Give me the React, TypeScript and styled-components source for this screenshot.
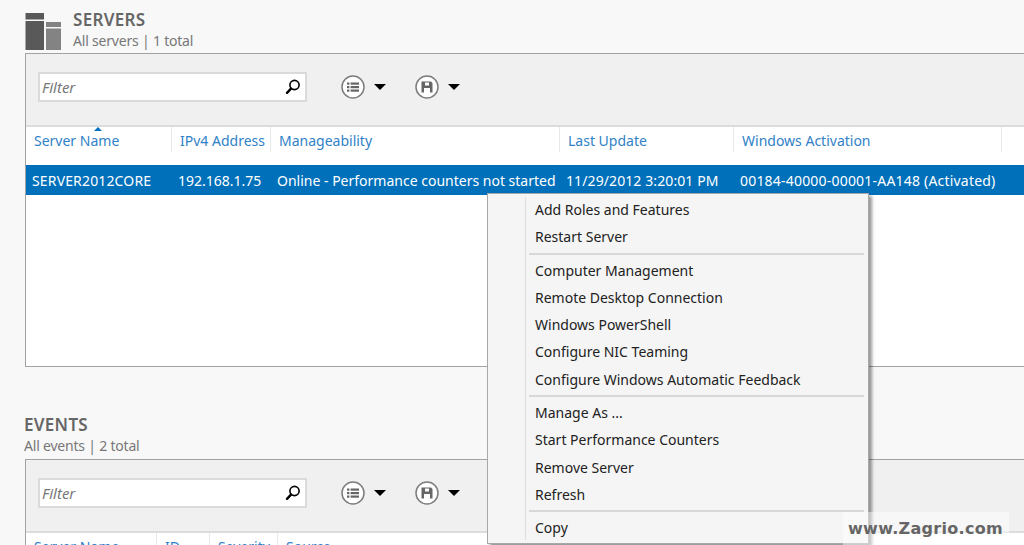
import React from "react";
import styled, { createGlobalStyle } from "styled-components";

const Global = createGlobalStyle`
  html, body { margin: 0; padding: 0; height: 545px; overflow: hidden; background: #f8f8f8; }
  #root { height: 545px; }
  * { box-sizing: border-box; }
`;

const Page = styled.div`
  position: relative;
  width: 1024px;
  height: 545px;
  overflow: hidden;
  padding: 8px 0 0 25px;
  font-family: "Noto Sans", "Open Sans", sans-serif;
  font-size: 14px;
  background: #f8f8f8;
`;

const Section = styled.section<{ $height: number; $gap?: number }>`
  width: 1040px;
  margin-top: ${(p) => p.$gap ?? 0}px;
  & > div:last-child { height: ${(p) => p.$height}px; }
`;

const Heading = styled.header`
  display: flex;
  align-items: flex-start;
  gap: 12px;
  height: 45px;
`;

const LogoSlot = styled.div`
  padding-top: 5px;
`;

const BareHeading = styled.header`
  height: 46px;
  margin-left: -1px;
`;

const TitleBlock = styled.div`
  display: flex;
  flex-direction: column;
`;

const Title = styled.div`
  font-size: 17px;
  line-height: 24px;
  margin-bottom: -2px;
  font-weight: 600;
  color: #666;
  letter-spacing: 0.3px;
`;

const Subtitle = styled.div`
  font-size: 14px;
  line-height: 21px;
  color: #777;
  letter-spacing: -0.2px;
`;

const Panel = styled.div`
  border: 1px solid #a2a2a2;
  background: #fff;
  overflow: hidden;
`;

const Toolbar = styled.div`
  display: flex;
  align-items: center;
  height: 73px;
  padding: 0 0 6px 12px;
  background: #f0f0f0;
  border-bottom: 2px solid #dcdcdc;
`;

const FilterBox = styled.div`
  display: flex;
  align-items: center;
  justify-content: space-between;
  width: 269px;
  height: 30px;
  padding: 0 3px 0 2px;
  background: #fff;
  border: 2px solid #dadada;
`;

const FilterText = styled.span`
  font-size: 15px;
  font-style: italic;
  color: #777;
`;

const ToolButton = styled.div<{ $first?: boolean }>`
  display: flex;
  align-items: center;
  gap: 9px;
  margin-left: ${(p) => (p.$first ? 34 : 29)}px;
`;

const Caret = styled.span`
  width: 0;
  height: 0;
  border-left: 6px solid transparent;
  border-right: 6px solid transparent;
  border-top: 6px solid #000;
`;

const HeaderRow = styled.div<{ $cols: string }>`
  display: grid;
  grid-template-columns: ${(p) => p.$cols};
  height: 38px;
  background: #fff;
`;

const HeaderCell = styled.div<{ $sorted?: boolean }>`
  position: relative;
  height: 25px;
  padding: 3px 0 0 8px;
  line-height: 22px;
  color: #2f82c8;
  white-space: nowrap;
  border-right: 1px solid #e8e8e8;
  ${(p) =>
    p.$sorted &&
    `&::before {
      content: "";
      position: absolute;
      left: 68px;
      top: 0;
      border-left: 4px solid transparent;
      border-right: 4px solid transparent;
      border-bottom: 4px solid #0072c6;
    }`}
`;

const DataRow = styled.div<{ $cols: string }>`
  display: grid;
  grid-template-columns: ${(p) => p.$cols};
  height: 30px;
  align-items: center;
  background: #0070bb;
  color: #fff;
  white-space: nowrap;
`;

const DataCell = styled.div<{ $tracking?: number }>`
  padding-left: 6px;
  letter-spacing: ${(p) => p.$tracking ?? 0}px;
`;

const Menu = styled.div`
  position: absolute;
  left: 487px;
  top: 193px;
  width: 382px;
  height: 351px;
  padding: 2px 4px 0 38px;
  background: #f5f5f5;
  border: 1px solid #a8a8a8;
  box-shadow: 3px 3px 3px rgba(0, 0, 0, 0.4);
  color: #222;
  &::before {
    content: "";
    position: absolute;
    left: 37px;
    top: 3px;
    bottom: 3px;
    width: 1px;
    background: #dedede;
  }
`;

const MenuItem = styled.div`
  height: 27.3px;
  line-height: 27.3px;
  padding-left: 9px;
  white-space: nowrap;
`;

const MenuDivider = styled.div`
  height: 2px;
  margin: 2px 0 2px 3px;
  background: #d8d8d8;
`;

const Watermark = styled.div`
  position: absolute;
  left: 843px;
  top: 512px;
  width: 166px;
  height: 33px;
  padding-left: 5px;
  background: rgba(255, 255, 255, 0.45);
  font-family: "DejaVu Sans", sans-serif;
  font-weight: 700;
  font-size: 16px;
  letter-spacing: 0.3px;
  line-height: 34px;
  color: #666;
  white-space: nowrap;
`;

const ServersIcon = () => (
  <svg width="36" height="37" viewBox="0 0 36 37" style={{ display: "block" }}>
    <rect x="0.5" y="0" width="18.5" height="6.5" fill="#595959" />
    <rect x="0.5" y="8" width="18.5" height="29" fill="#595959" />
    <rect x="21" y="9" width="15" height="5" fill="#838383" />
    <rect x="21" y="15.5" width="15" height="21.5" fill="#838383" />
  </svg>
);

const SearchIcon = () => (
  <svg width="18" height="18" viewBox="0 0 18 18">
    <circle cx="10.5" cy="7" r="4.6" fill="none" stroke="#000" strokeWidth="1.6" />
    <path d="M7 10.6 L3 14.8" stroke="#000" strokeWidth="2.4" strokeLinecap="round" />
  </svg>
);

const ListIcon = () => (
  <svg width="24" height="24" viewBox="0 0 24 24">
    <circle cx="12" cy="12" r="11" fill="#fff" stroke="#7d7d7d" strokeWidth="1.5" />
    <g fill="#666">
      <rect x="6" y="7.5" width="2.4" height="2.2" />
      <rect x="6" y="11" width="2.4" height="2.2" />
      <rect x="6" y="14.5" width="2.4" height="2.2" />
      <rect x="9.6" y="7.5" width="8.4" height="2.2" />
      <rect x="9.6" y="11" width="8.4" height="2.2" />
      <rect x="9.6" y="14.5" width="8.4" height="2.2" />
    </g>
  </svg>
);

const SaveIcon = () => (
  <svg width="24" height="24" viewBox="0 0 24 24">
    <circle cx="12" cy="12" r="11" fill="#fff" stroke="#7d7d7d" strokeWidth="1.5" />
    <path
      fillRule="evenodd"
      fill="#666"
      d="M6.5 6.5 H16 L17.5 8 V17.5 H6.5 Z M10 7.5 V10.5 H14 V7.5 Z M9 13 V17.5 H15 V13 Z"
    />
  </svg>
);

const Tools = () => (
  <Toolbar>
    <FilterBox>
      <FilterText>Filter</FilterText>
      <SearchIcon />
    </FilterBox>
    <ToolButton $first>
      <ListIcon />
      <Caret />
    </ToolButton>
    <ToolButton>
      <SaveIcon />
      <Caret />
    </ToolButton>
  </Toolbar>
);

const serverCols = "146px 99px 289px 174px 268px 1fr";
const eventCols = "131px 53px 68px 1fr";

const menuGroups = [
  ["Add Roles and Features", "Restart Server"],
  [
    "Computer Management",
    "Remote Desktop Connection",
    "Windows PowerShell",
    "Configure NIC Teaming",
    "Configure Windows Automatic Feedback",
  ],
  ["Manage As ...", "Start Performance Counters", "Remove Server", "Refresh"],
  ["Copy"],
];

export default function App() {
  return (
    <Page>
      <Global />
      <Section $height={314}>
        <Heading>
          <LogoSlot>
            <ServersIcon />
          </LogoSlot>
          <TitleBlock>
            <Title>SERVERS</Title>
            <Subtitle>All servers | 1 total</Subtitle>
          </TitleBlock>
        </Heading>
        <Panel>
          <Tools />
          <HeaderRow $cols={serverCols}>
            <HeaderCell $sorted>Server Name</HeaderCell>
            <HeaderCell>IPv4 Address</HeaderCell>
            <HeaderCell>Manageability</HeaderCell>
            <HeaderCell>Last Update</HeaderCell>
            <HeaderCell>Windows Activation</HeaderCell>
          </HeaderRow>
          <DataRow $cols={serverCols}>
            <DataCell $tracking={0.15}>SERVER2012CORE</DataCell>
            <DataCell>192.168.1.75</DataCell>
            <DataCell>Online - Performance counters not started</DataCell>
            <DataCell $tracking={0.1}>11/29/2012 3:20:01 PM</DataCell>
            <DataCell $tracking={0.2}>00184-40000-00001-AA148 (Activated)</DataCell>
          </DataRow>
        </Panel>
      </Section>
      <Section $height={100} $gap={46}>
        <BareHeading>
          <Title>EVENTS</Title>
          <Subtitle>All events | 2 total</Subtitle>
        </BareHeading>
        <Panel>
          <Tools />
          <HeaderRow $cols={eventCols}>
            <HeaderCell>Server Name</HeaderCell>
            <HeaderCell>ID</HeaderCell>
            <HeaderCell>Severity</HeaderCell>
            <HeaderCell>Source</HeaderCell>
          </HeaderRow>
        </Panel>
      </Section>
      <Menu>
        {menuGroups.map((group, i) => (
          <React.Fragment key={i}>
            {i > 0 && <MenuDivider />}
            {group.map((label) => (
              <MenuItem key={label}>{label}</MenuItem>
            ))}
          </React.Fragment>
        ))}
      </Menu>
      <Watermark>www.Zagrio.com</Watermark>
    </Page>
  );
}
